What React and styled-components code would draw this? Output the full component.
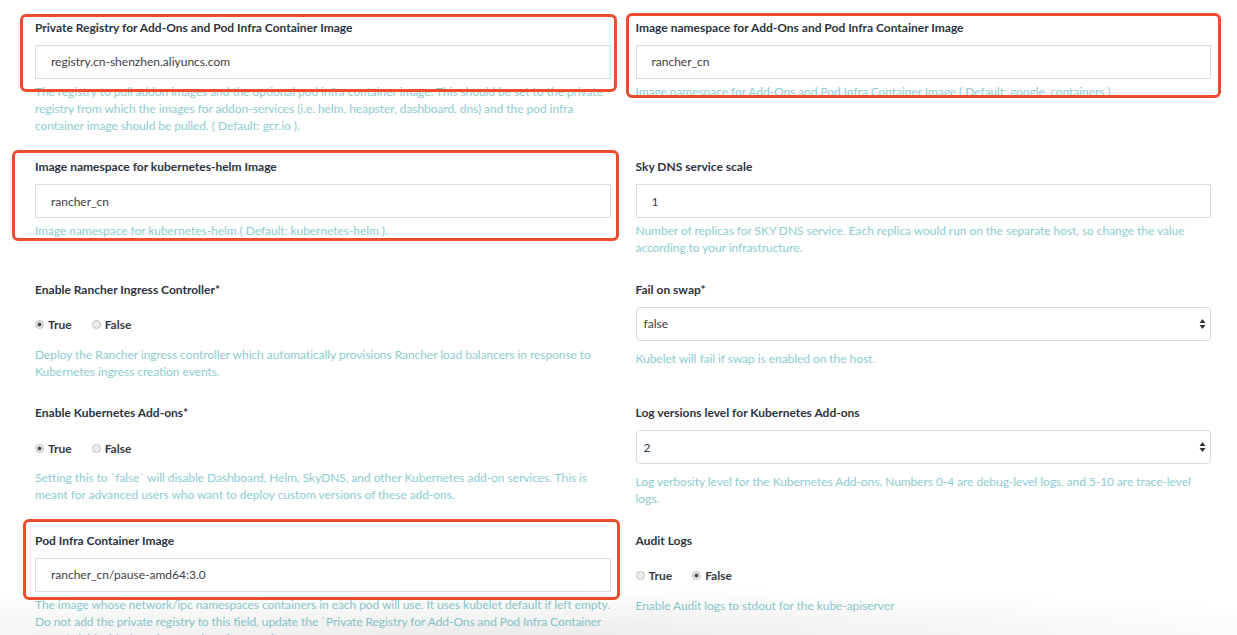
import React from 'react';
import styled, { createGlobalStyle, css } from 'styled-components';

const Global = createGlobalStyle`
  html, body { margin: 0; padding: 0; background: #fff; overflow: hidden; }
  body { font-family: Lato, "Open Sans", sans-serif; }
  * { box-sizing: border-box; }
`;

const Page = styled.div`
  position: relative;
  padding: 18.5px 26px 0 35px;
`;

const Row = styled.div`
  display: grid;
  grid-template-columns: 1fr 1fr;
  column-gap: 25px;
  align-items: start;
  margin-bottom: 24.5px;
`;

const Field = styled.div`
  display: flex;
  flex-direction: column;
  min-width: 0;
`;

const Label = styled.label`
  font-size: 12px;
  font-weight: 700;
  line-height: 18px;
  color: #2c3340;
  margin-bottom: 8px;
`;

const TextInput = styled.input`
  height: 34px;
  width: 100%;
  border: 1px solid #dcdcdc;
  padding: 0 15px;
  font-family: Lato, sans-serif;
  font-size: 12px;
  color: #404040;
  background: #fff;
  outline: none;
  border-radius: 0;
`;

const SelectWrap = styled.div`
  position: relative;
  height: 34px;
`;

const Select = styled.select`
  appearance: none;
  -webkit-appearance: none;
  width: 100%;
  height: 34px;
  border: 1px solid #dadada;
  border-radius: 4px;
  padding: 0 7px;
  font-family: Lato, sans-serif;
  font-size: 12px;
  color: #3a3a3a;
  background: #fff;
  outline: none;
`;

const Arrows = styled.svg`
  position: absolute;
  right: 5px;
  top: 11px;
  pointer-events: none;
`;

const RadioGroup = styled.div`
  display: flex;
  align-items: center;
  gap: 20px;
  height: 18px;
  margin-top: 9px;
`;

const RadioOption = styled.label`
  display: flex;
  align-items: center;
  gap: 4px;
  font-size: 12px;
  font-weight: 700;
  color: #333a44;
`;

const RadioDot = styled.span`
  width: 9px;
  height: 9px;
  border-radius: 50%;
  border: 1px solid #bdbdbd;
  background: #ededed;
  ${(p) =>
    p.$checked &&
    css`
      background: radial-gradient(circle, #4a4a4a 0 1.7px, #ececec 2.3px);
    `}
`;

const Help = styled.p`
  margin: ${(p) => p.$gap}px 0 0;
  font-size: 12px;
  line-height: 17px;
  letter-spacing: -0.06px;
  color: #8ccbd3;
`;

const Highlight = styled.div`
  position: absolute;
  border: 3px solid #ee4d2d;
  border-radius: 6px;
  pointer-events: none;
`;

const BottomShade = styled.div`
  position: fixed;
  left: 0;
  right: 0;
  bottom: 0;
  height: 48px;
  pointer-events: none;
  background: radial-gradient(ellipse 75% 100% at 40% 100%, rgba(0, 0, 0, 0.075), rgba(0, 0, 0, 0) 100%);
`;

function TextField({ label, value, help }) {
  return (
    <Field>
      <Label>{label}</Label>
      <TextInput defaultValue={value} readOnly />
      <Help $gap={4}>{help}</Help>
    </Field>
  );
}

function SelectField({ label, value, options, help }) {
  return (
    <Field>
      <Label>{label}</Label>
      <SelectWrap>
        <Select defaultValue={value}>
          {options.map((o) => (
            <option key={o}>{o}</option>
          ))}
        </Select>
        <Arrows width="7" height="12" viewBox="0 0 7 12">
          <path d="M3.5 1 L6.5 5 L0.5 5 Z" fill="#333" />
          <path d="M3.5 11 L6.5 7 L0.5 7 Z" fill="#333" />
        </Arrows>
      </SelectWrap>
      <Help $gap={9}>{help}</Help>
    </Field>
  );
}

function RadioField({ label, value, help }) {
  return (
    <Field>
      <Label>{label}</Label>
      <RadioGroup>
        <RadioOption>
          <RadioDot $checked={value === true} />
          True
        </RadioOption>
        <RadioOption>
          <RadioDot $checked={value === false} />
          False
        </RadioOption>
      </RadioGroup>
      <Help $gap={12}>{help}</Help>
    </Field>
  );
}

const boxes = [
  { left: 20, top: 14, width: 597, height: 78 },
  { left: 626, top: 13, width: 595, height: 85 },
  { left: 12, top: 150, width: 607, height: 91 },
  { left: 23, top: 519, width: 597, height: 81 },
];

export default function App() {
  return (
    <>
      <Global />
      <Page>
        <Row>
          <TextField
            label="Private Registry for Add-Ons and Pod Infra Container Image"
            value="registry.cn-shenzhen.aliyuncs.com"
            help="The registry to pull addon images and the optional pod infra container image. This should be set to the private registry from which the images for addon-services (i.e. helm, heapster, dashboard, dns) and the pod infra container image should be pulled. ( Default: gcr.io )."
          />
          <TextField
            label="Image namespace for Add-Ons and Pod Infra Container Image"
            value="rancher_cn"
            help="Image namespace for Add-Ons and Pod Infra Container Image ( Default: google_containers )."
          />
        </Row>
        <Row>
          <TextField
            label="Image namespace for kubernetes-helm Image"
            value="rancher_cn"
            help="Image namespace for kubernetes-helm ( Default: kubernetes-helm )."
          />
          <TextField
            label="Sky DNS service scale"
            value="1"
            help="Number of replicas for SKY DNS service. Each replica would run on the separate host, so change the value according to your infrastructure."
          />
        </Row>
        <Row>
          <RadioField
            label="Enable Rancher Ingress Controller*"
            value={true}
            help="Deploy the Rancher ingress controller which automatically provisions Rancher load balancers in response to Kubernetes ingress creation events."
          />
          <SelectField
            label="Fail on swap*"
            value="false"
            options={['true', 'false']}
            help="Kubelet will fail if swap is enabled on the host."
          />
        </Row>
        <Row>
          <RadioField
            label="Enable Kubernetes Add-ons*"
            value={true}
            help="Setting this to `false` will disable Dashboard, Helm, SkyDNS, and other Kubernetes add-on services. This is meant for advanced users who want to deploy custom versions of these add-ons."
          />
          <SelectField
            label="Log versions level for Kubernetes Add-ons"
            value="2"
            options={['0', '1', '2', '3', '4', '5', '6', '7', '8', '9', '10']}
            help="Log verbosity level for the Kubernetes Add-ons. Numbers 0-4 are debug-level logs, and 5-10 are trace-level logs."
          />
        </Row>
        <Row>
          <TextField
            label="Pod Infra Container Image"
            value="rancher_cn/pause-amd64:3.0"
            help="The image whose network/ipc namespaces containers in each pod will use. It uses kubelet default if left empty. Do not add the private registry to this field, update the `Private Registry for Add-Ons and Pod Infra Container Image` field with the private registry information."
          />
          <RadioField
            label="Audit Logs"
            value={false}
            help="Enable Audit logs to stdout for the kube-apiserver"
          />
        </Row>
        {boxes.map((b, i) => (
          <Highlight key={i} style={{ left: b.left, top: b.top, width: b.width, height: b.height }} />
        ))}
      </Page>
      <BottomShade />
    </>
  );
}
